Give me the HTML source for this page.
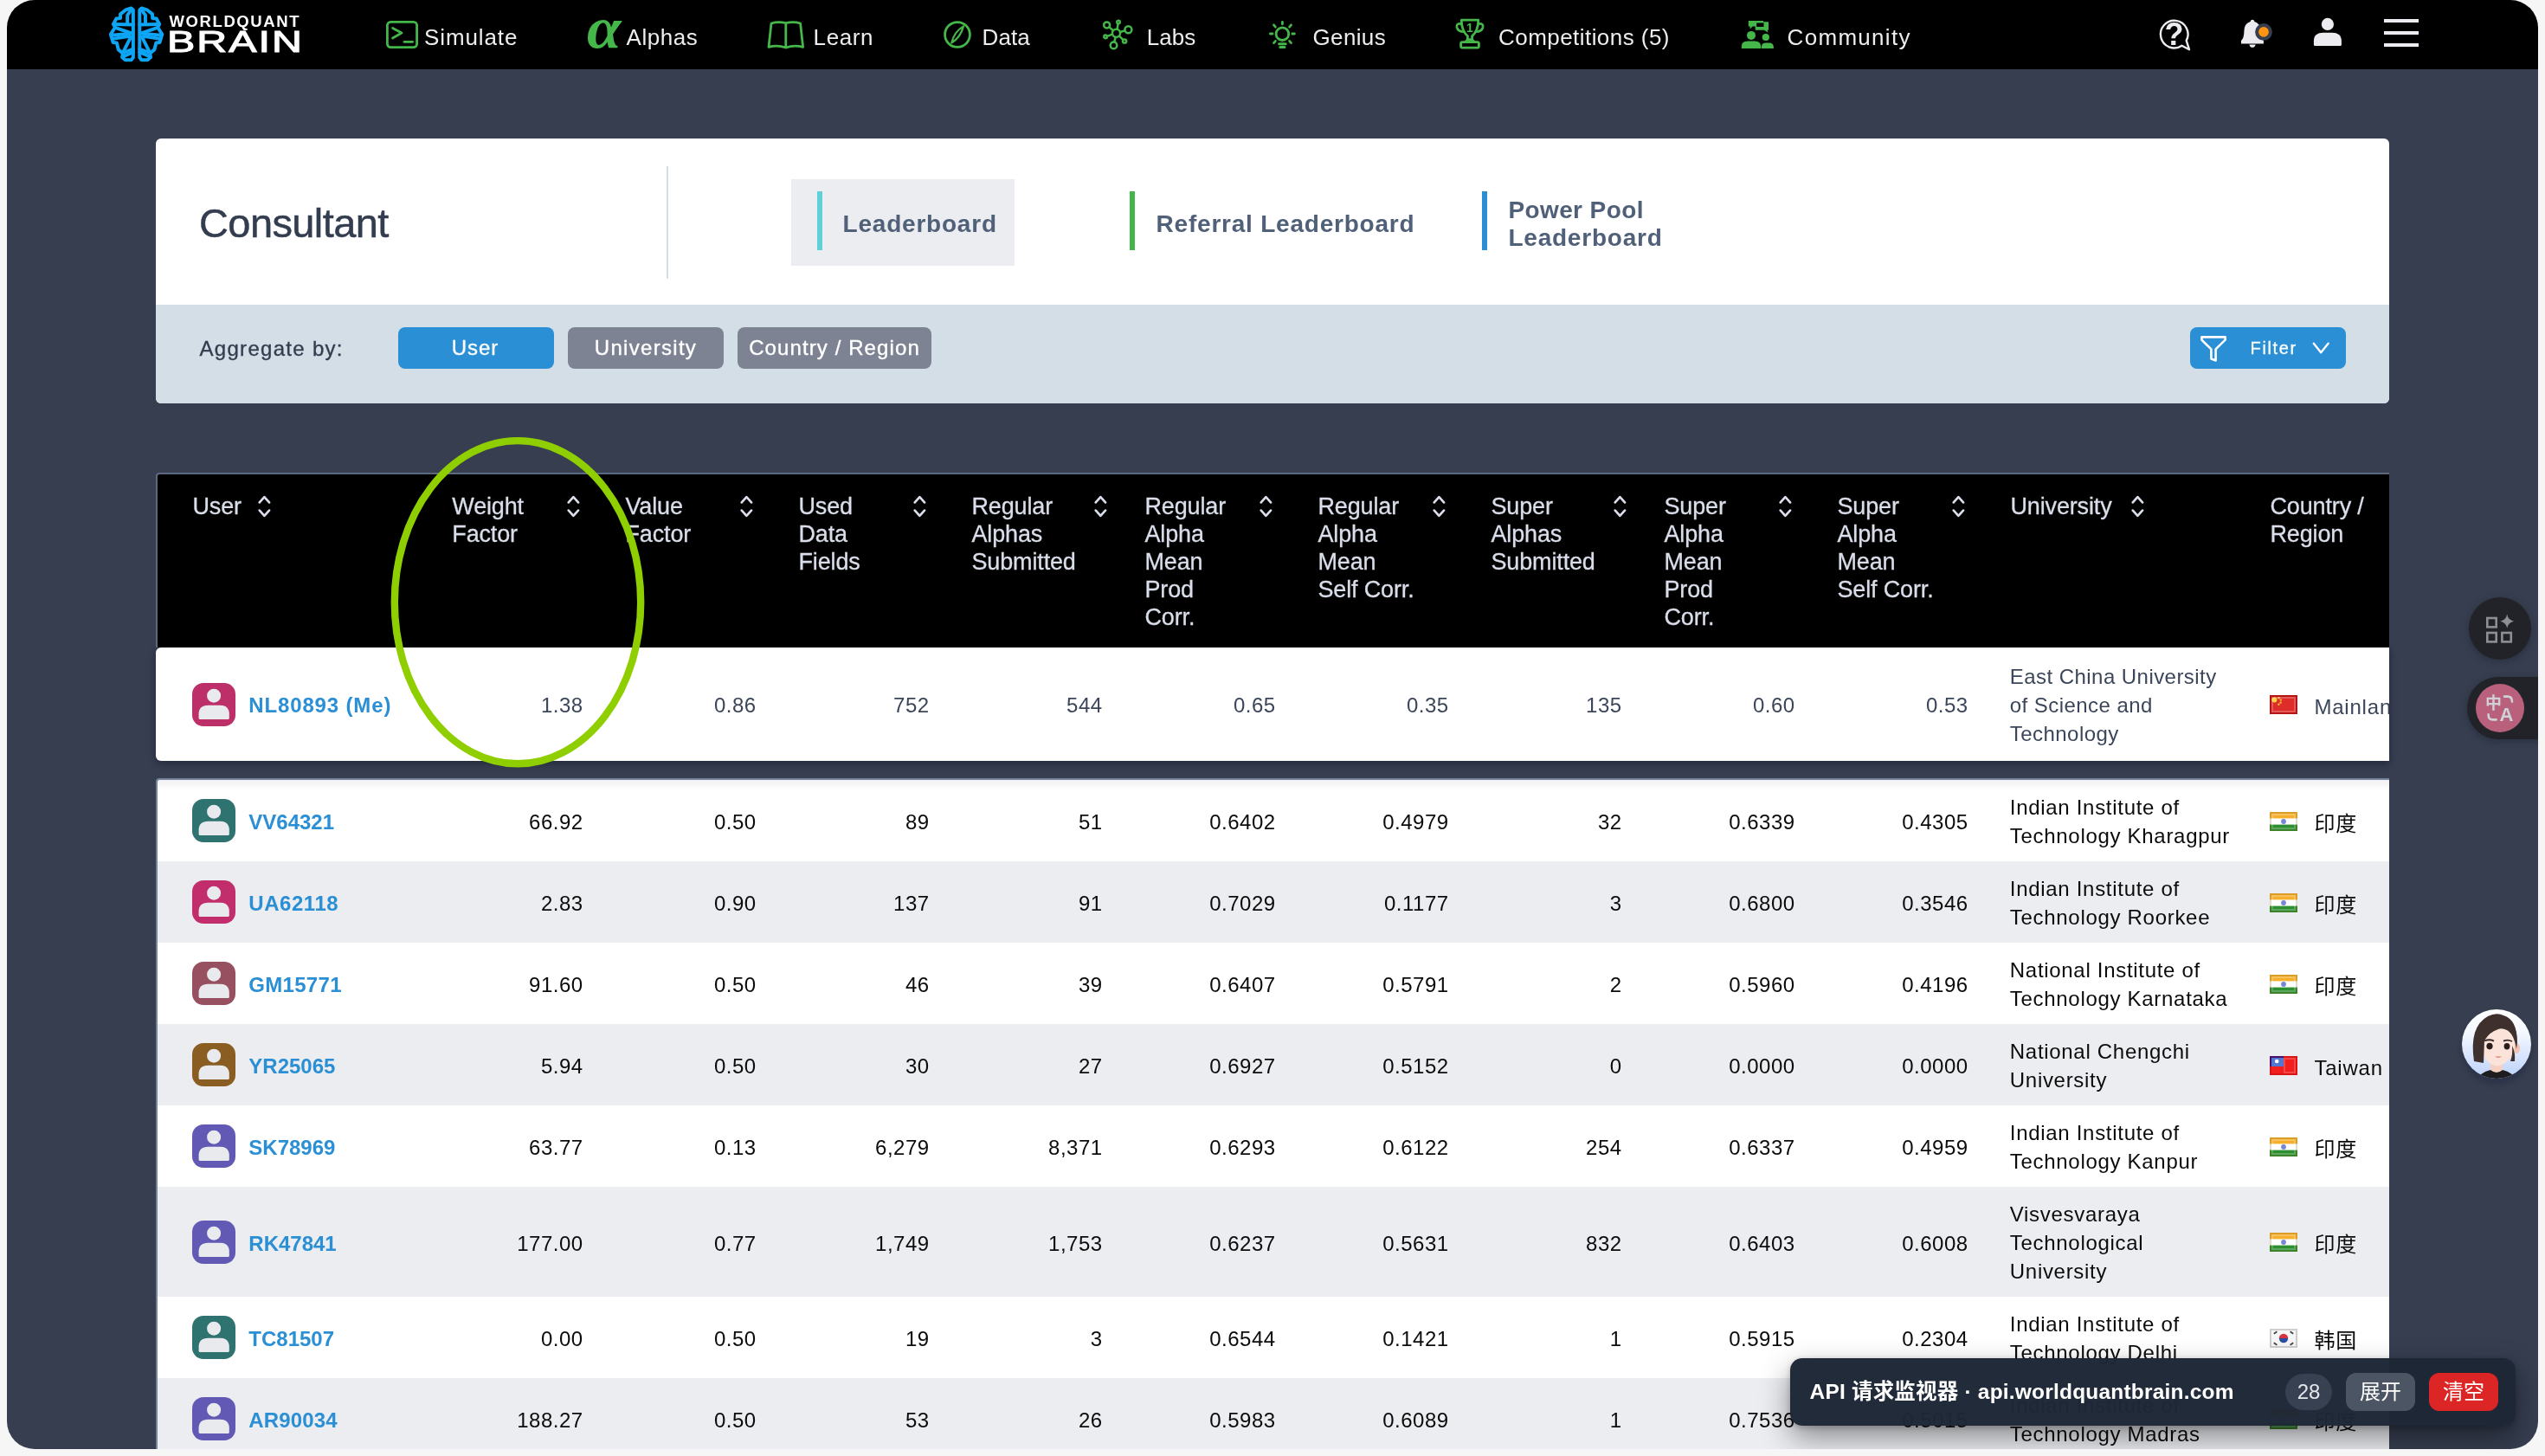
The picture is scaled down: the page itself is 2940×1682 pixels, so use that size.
<!DOCTYPE html><html lang="en"><head><meta charset="utf-8"><title>Consultant Leaderboard - WorldQuant BRAIN</title><style>
*{box-sizing:border-box;margin:0;padding:0}
html,body{width:2940px;height:1682px;overflow:hidden;background:#f6f6f6}
@media (max-width:1600px){html{zoom:.5}}
body{font-family:"Liberation Sans","Noto Sans CJK SC",sans-serif;position:relative}
#app{will-change:transform;position:absolute;left:0;top:0;width:2940px;height:1682px;background:#363e50;clip-path:inset(0px 8px 8px 8px round 32px);overflow:hidden}
.abs{position:absolute}
.t{position:absolute;white-space:pre;line-height:1}
#hdr{position:absolute;left:0;top:0;width:2940px;height:80px;background:#000}
.nav{color:#ededed;font-size:26px}
#card{position:absolute;left:180px;top:160px;width:2580px;height:306px;background:#fff;border-radius:6px;overflow:hidden}
#agg{position:absolute;left:0;top:192px;width:2580px;height:114px;background:#d4dee7}
.btn{position:absolute;top:218px;height:48px;border-radius:8px;color:#fff;font-size:24px;line-height:48px;text-align:center;white-space:pre;-webkit-text-stroke:.35px #fff}
.tabtxt{position:absolute;font-weight:bold;font-size:28px;line-height:32px;color:#506079;letter-spacing:.78px;white-space:pre}
#thead{position:absolute;left:180px;top:546px;width:2580px;height:202px;background:#000;border-top:2px solid #5b6a80;border-left:2px solid #5b6a80;border-radius:4px 0 0 0;overflow:hidden}
.th{position:absolute;top:21px;font-size:27px;line-height:32px;color:#d9deea;letter-spacing:-.15px;white-space:pre;-webkit-text-stroke:.3px #d9deea}
.si{position:absolute;top:24px;width:16px;height:26px}
#me{position:absolute;left:180px;top:748px;width:2580px;height:131px;background:#fff;border-radius:6px 0 0 6px;overflow:hidden;color:#3b465a;box-shadow:0 3px 9px rgba(12,16,30,.45)}
#tb{position:absolute;left:180px;top:899px;width:2580px;height:800px;background:linear-gradient(#f1f1f3,#fff 12px);border-top:2px solid #76839a;border-left:2px solid #76839a;overflow:hidden;color:#0b0b0b;border-radius:4px 0 0 0}
#tb .c{padding-top:3.2px}
#tb .cty{padding-top:6px}
.row{position:absolute;left:0;width:2580px}
.row.alt{background:#ecedf1}
.c{position:absolute;top:0;height:100%;display:flex;align-items:center;font-size:24px;line-height:33px;white-space:pre;padding-top:1.5px}
.num{justify-content:flex-end;text-align:right;letter-spacing:.5px}
.name{font-weight:bold;color:#2a8fd4;letter-spacing:0}
.uni{letter-spacing:.7px}
.cty{letter-spacing:.8px;padding-top:5px}
.av{position:absolute;left:42px;width:50px;height:50px;border-radius:13px}
.flag{position:absolute;width:32px;height:22px}
</style></head><body><div id="app">
<div id="hdr">
<svg class="abs" style="left:120px;top:4px" width="76" height="72" viewBox="0 0 1537 1456" fill="none" stroke="#0da5f4" stroke-width="80" stroke-linejoin="round" stroke-linecap="round"><g><path d="M685 150 L640 110 L510 150 L385 250 L385 345 L290 355 L225 480 L260 560 L160 720 L215 910 L300 920 L340 1080 L440 1160 L430 1260 L500 1320 L640 1320 L685 1260 Z"/><path d="M625 165 L550 275 L550 455"/><path d="M225 485 L685 495"/><path d="M262 562 L660 700"/><path d="M185 745 L640 700"/><path d="M235 822 L600 765"/><path d="M625 790 L450 1140"/><path d="M440 1158 L685 1062"/><path d="M432 1250 L685 1135"/></g><g transform="translate(1520,0) scale(-1,1)"><path d="M685 150 L640 110 L510 150 L385 250 L385 345 L290 355 L225 480 L260 560 L160 720 L215 910 L300 920 L340 1080 L440 1160 L430 1260 L500 1320 L640 1320 L685 1260 Z"/><path d="M625 165 L550 275 L550 455"/><path d="M225 485 L685 495"/><path d="M262 562 L660 700"/><path d="M185 745 L640 700"/><path d="M235 822 L600 765"/><path d="M625 790 L450 1140"/><path d="M440 1158 L685 1062"/><path d="M432 1250 L685 1135"/></g></svg>
<div class="t " style="left:195.5px;top:15.9px;font-size:18.5px;font-weight:bold;color:#fff;letter-spacing:1.6px">WORLDQUANT</div>
<div class="t" style="left:192.5px;top:30.4px;font-size:35px;color:#fff;-webkit-text-stroke:1.1px #fff;letter-spacing:1.5px;transform-origin:0 0;transform:scaleX(1.38)">BRAIN</div>
<svg class="abs" style="left:445px;top:22px" width="40" height="36" viewBox="0 0 40 36" fill="none" stroke="#45b649" stroke-width="2.8" stroke-linecap="round" stroke-linejoin="round"><rect x="2.4" y="3.3" width="34.2" height="29.3" rx="4"/><path d="M8.6 10.4 L19 16 L8.6 22"/><path d="M22 26.3 H31.6"/></svg>
<div class="t nav" style="left:490px;top:29.8px;font-size:26px;letter-spacing:0.9px">Simulate</div>
<div class="t" style="left:677.5px;top:-1px;font-family:'Liberation Serif',serif;font-style:italic;font-weight:bold;font-size:67px;color:#45b649;transform-origin:0 50%;transform:scaleX(1.07)">α</div>
<div class="t nav" style="left:723.5px;top:29.8px;font-size:26px;letter-spacing:0.55px">Alphas</div>
<svg class="abs" style="left:885px;top:22px" width="46" height="36" viewBox="0 0 46 36" fill="none" stroke="#45b649" stroke-width="2.8" stroke-linecap="round" stroke-linejoin="round"><path d="M22.8 4.6 Q14 2.4 6 5 L3 32.4 Q13 29.6 22.8 33 Q32.6 29.6 42.6 32.4 L39.6 5 Q31.6 2.4 22.8 4.6 V33"/></svg>
<div class="t nav" style="left:939.6px;top:29.8px;font-size:26px;letter-spacing:0.6px">Learn</div>
<svg class="abs" style="left:1088px;top:22px" width="36" height="36" viewBox="0 0 36 36" fill="none" stroke="#45b649" stroke-width="2.8" stroke-linejoin="round"><circle cx="18" cy="18" r="14.4"/><path d="M25 8.4 Q14.5 14.5 11.2 27.5 Q21.5 21.5 25 8.4 Z" stroke-width="2.2"/></svg>
<div class="t nav" style="left:1134.5px;top:29.8px;font-size:26px;letter-spacing:0.1px">Data</div>
<svg class="abs" style="left:1272px;top:21px" width="40" height="38" viewBox="0 0 40 38" fill="none" stroke="#45b649" stroke-width="2.5" stroke-linecap="round"><circle cx="17.5" cy="17.3" r="4.6"/><circle cx="6.6" cy="7.9" r="3.5"/><circle cx="20" cy="4.6" r="1.8"/><circle cx="31.4" cy="13.2" r="4"/><circle cx="5.1" cy="21.4" r="1.8"/><circle cx="27.1" cy="26.5" r="2.1"/><circle cx="14.5" cy="31.4" r="3.8"/><path d="M9.4 10.4 L14 14.2 M19.5 6.6 L18.6 12.6 M27.6 14.4 L22 16 M7 20.8 L13 18.6 M25.4 24.8 L21 20.6 M15.2 27.6 L16.6 22"/></svg>
<div class="t nav" style="left:1324.8px;top:29.8px;font-size:26px;letter-spacing:0px">Labs</div>
<svg class="abs" style="left:1461px;top:20px" width="40" height="40" viewBox="0 0 40 40" fill="none" stroke="#45b649" stroke-width="2.8" stroke-linecap="round"><circle cx="20.4" cy="19.2" r="7.3"/><path d="M20.4 5.4 V7.8 M10.5 8.8 L12.4 11.1 M30.5 8.8 L28.6 11.1 M6.4 19 H9 M31.8 19 H34.4 M10.5 29.6 L12.4 27.4 M30.5 29.6 L28.6 27.4"/><path d="M16.6 30.8 H24.2 M17.8 34.6 H23" stroke-width="3"/></svg>
<div class="t nav" style="left:1516.5px;top:29.8px;font-size:26px;letter-spacing:0.35px">Genius</div>
<svg class="abs" style="left:1679px;top:19px" width="38" height="40" viewBox="0 0 38 40" fill="none" stroke="#45b649" stroke-width="2.8" stroke-linecap="round" stroke-linejoin="round"><path d="M9.2 4.2 H28.8 Q28.4 17 21.6 22.6 V26.6 H16.4 V22.6 Q9.6 17 9.2 4.2 Z"/><path d="M9.4 8.6 Q3 7.4 4 12.6 Q5.4 17.6 12 17.6 M28.6 8.6 Q35 7.4 34 12.6 Q32.6 17.6 26 17.6"/><path d="M16.4 26.6 L13.6 29.6 H24.4 L21.6 26.6"/><rect x="8.6" y="29.6" width="20.8" height="6.6" rx="1.6"/></svg>
<div class="t" style="left:1694px;top:25.2px;font-size:14px;font-weight:bold;color:#45b649">1</div>
<div class="t nav" style="left:1731px;top:29.8px;font-size:26px;letter-spacing:0.45px">Competitions (5)</div>
<svg class="abs" style="left:2010px;top:22px" width="42" height="36" viewBox="0 0 42 36" fill="#45b649"><circle cx="13" cy="18.9" r="5"/><path d="M1.8 34 V32 Q1.8 25.6 9 25.6 H17 Q24.2 25.6 24.2 32 V34 Z"/><circle cx="29.8" cy="21" r="4.1"/><path d="M24.8 34 V32.6 Q24.8 27.4 30 27.4 H33.6 Q38.9 27.4 38.9 32.6 V34 Z"/><path d="M9.8 2.1 H27 V8.6 H14.6 L11.6 11.6 V8.6 H9.8 Z"/><path d="M17.7 3.3 H33 V12.8 H31.6 L32.6 15.6 L28 12.8 H17.7 Z"/><rect x="19.2" y="4.5" width="8.3" height="4.5" fill="#000"/></svg>
<div class="t nav" style="left:2064.6px;top:29.8px;font-size:26px;letter-spacing:1.3px">Community</div>
<svg class="abs" style="left:2492px;top:20px" width="42" height="40" viewBox="0 0 42 40" fill="none" stroke="#ececf0" stroke-width="2.4" stroke-linejoin="round"><path d="M28.5 32.7 A15.8 15.8 0 1 1 33.7 26.9 L37 37.2 Z"/></svg>
<div class="t" style="left:2500.6px;top:21.5px;font-size:36px;font-weight:bold;color:#ececf0">?</div>
<svg class="abs" style="left:2586px;top:20px" width="44" height="38" viewBox="0 0 44 38"><path fill="#ececf0" d="M16 2.7 Q18 2.7 18.4 5 Q25.4 7 25.6 16 Q25.6 24 28.9 27 V30.6 H3 V27 Q6.4 24 6.4 16 Q6.6 7 13.6 5 Q14 2.7 16 2.7 Z"/><path fill="#ececf0" d="M12.4 31.4 H19.6 Q18.8 34.8 16 34.8 Q13.2 34.8 12.4 31.4 Z"/><circle cx="29" cy="16.9" r="9.9" fill="#363e50"/><circle cx="29" cy="16.9" r="5.9" fill="#ff9412"/></svg>
<svg class="abs" style="left:2670px;top:18px" width="38" height="38" viewBox="0 0 38 38" fill="#ececf0"><circle cx="18.9" cy="9.9" r="7.1"/><path d="M2.9 33.4 V29.6 Q2.9 19.8 14 19.8 H23.8 Q34.9 19.8 34.9 29.6 V33.4 Q34.9 34.9 33.4 34.9 H4.4 Q2.9 34.9 2.9 33.4 Z"/></svg>
<div class="abs" style="left:2754px;top:22px;width:40px;height:4px;background:#ececf0"></div>
<div class="abs" style="left:2754px;top:36px;width:40px;height:4px;background:#ececf0"></div>
<div class="abs" style="left:2754px;top:50px;width:40px;height:4px;background:#ececf0"></div>
</div>
<div id="card">
<div class="t" style="left:50px;top:73.8px;font-size:47px;color:#333d4f;letter-spacing:-.6px;-webkit-text-stroke:.5px #333d4f">Consultant</div>
<div class="abs" style="left:590px;top:32px;width:2px;height:130px;background:#d4dee7"></div>
<div class="abs" style="left:734px;top:47px;width:258px;height:100px;background:#ecedf1"></div>
<div class="abs" style="left:764px;top:61px;width:6px;height:68px;background:#5fcfd9"></div>
<div class="tabtxt" style="left:793.6px;top:82.8px">Leaderboard</div>
<div class="abs" style="left:1125px;top:61px;width:6px;height:68px;background:#44b649"></div>
<div class="tabtxt" style="left:1155.6px;top:82.8px">Referral Leaderboard</div>
<div class="abs" style="left:1532px;top:61px;width:6px;height:68px;background:#2b8ed4"></div>
<div class="tabtxt" style="left:1562.4px;top:67.3px"><span style="letter-spacing:.4px">Power Pool</span><br>Leaderboard</div>
<div id="agg"></div>
<div class="t" style="left:50.5px;top:230.7px;font-size:24px;color:#333d4f;letter-spacing:1.3px;-webkit-text-stroke:.35px #333d4f">Aggregate by:</div>
<div class="btn" style="left:280px;width:180px;background:#2a8fd4;letter-spacing:.9px;text-indent:-2px">User</div>
<div class="btn" style="left:476px;width:180px;background:#7e8394;letter-spacing:1.3px">University</div>
<div class="btn" style="left:672px;width:224px;background:#7e8394;letter-spacing:1.1px">Country / Region</div>
<div class="btn" style="left:2350px;width:180px;background:#2a8fd4"></div>
<svg class="abs" style="left:2360px;top:226px" width="34" height="34" viewBox="0 0 34 34" fill="none" stroke="#fff" stroke-width="2.6" stroke-linejoin="round"><path d="M3.4 3.4 H30.6 V6.6 L19.6 17.4 V30.4 L14.4 28.6 V17.4 L3.4 6.6 Z"/></svg>
<div class="t" style="left:2419.6px;top:232.3px;font-size:20px;color:#fff;letter-spacing:1.6px;-webkit-text-stroke:.3px #fff">Filter</div>
<svg class="abs" style="left:2490px;top:234px" width="22" height="16" viewBox="0 0 22 16" fill="none" stroke="#fff" stroke-width="2.4" stroke-linecap="round" stroke-linejoin="round"><path d="M2.8 2.8 L11.2 13.2 L19.6 2.8"/></svg>
</div>
<div id="thead">
<div class="th" style="left:40.5px">User</div>
<svg class="si" style="left:115.5px" viewBox="0 0 16 26" fill="none" stroke="#d9deea" stroke-width="2.7" stroke-linecap="round" stroke-linejoin="round"><path d="M1.8 8.4 L7.4 2.2 L13 8.4 M1.8 17.6 L7.4 23.8 L13 17.6"/></svg>
<div class="th" style="left:340.29999999999995px">Weight<br>Factor</div>
<svg class="si" style="left:473px" viewBox="0 0 16 26" fill="none" stroke="#d9deea" stroke-width="2.7" stroke-linecap="round" stroke-linejoin="round"><path d="M1.8 8.4 L7.4 2.2 L13 8.4 M1.8 17.6 L7.4 23.8 L13 17.6"/></svg>
<div class="th" style="left:540.5px">Value<br>Factor</div>
<svg class="si" style="left:673px" viewBox="0 0 16 26" fill="none" stroke="#d9deea" stroke-width="2.7" stroke-linecap="round" stroke-linejoin="round"><path d="M1.8 8.4 L7.4 2.2 L13 8.4 M1.8 17.6 L7.4 23.8 L13 17.6"/></svg>
<div class="th" style="left:740.5px">Used<br>Data<br>Fields</div>
<svg class="si" style="left:873px" viewBox="0 0 16 26" fill="none" stroke="#d9deea" stroke-width="2.7" stroke-linecap="round" stroke-linejoin="round"><path d="M1.8 8.4 L7.4 2.2 L13 8.4 M1.8 17.6 L7.4 23.8 L13 17.6"/></svg>
<div class="th" style="left:940.5px">Regular<br>Alphas<br>Submitted</div>
<svg class="si" style="left:1082px" viewBox="0 0 16 26" fill="none" stroke="#d9deea" stroke-width="2.7" stroke-linecap="round" stroke-linejoin="round"><path d="M1.8 8.4 L7.4 2.2 L13 8.4 M1.8 17.6 L7.4 23.8 L13 17.6"/></svg>
<div class="th" style="left:1140.5px">Regular<br>Alpha<br>Mean<br>Prod<br>Corr.</div>
<svg class="si" style="left:1273px" viewBox="0 0 16 26" fill="none" stroke="#d9deea" stroke-width="2.7" stroke-linecap="round" stroke-linejoin="round"><path d="M1.8 8.4 L7.4 2.2 L13 8.4 M1.8 17.6 L7.4 23.8 L13 17.6"/></svg>
<div class="th" style="left:1340.5px">Regular<br>Alpha<br>Mean<br>Self Corr.</div>
<svg class="si" style="left:1473px" viewBox="0 0 16 26" fill="none" stroke="#d9deea" stroke-width="2.7" stroke-linecap="round" stroke-linejoin="round"><path d="M1.8 8.4 L7.4 2.2 L13 8.4 M1.8 17.6 L7.4 23.8 L13 17.6"/></svg>
<div class="th" style="left:1540.5px">Super<br>Alphas<br>Submitted</div>
<svg class="si" style="left:1682px" viewBox="0 0 16 26" fill="none" stroke="#d9deea" stroke-width="2.7" stroke-linecap="round" stroke-linejoin="round"><path d="M1.8 8.4 L7.4 2.2 L13 8.4 M1.8 17.6 L7.4 23.8 L13 17.6"/></svg>
<div class="th" style="left:1740.5px">Super<br>Alpha<br>Mean<br>Prod<br>Corr.</div>
<svg class="si" style="left:1873px" viewBox="0 0 16 26" fill="none" stroke="#d9deea" stroke-width="2.7" stroke-linecap="round" stroke-linejoin="round"><path d="M1.8 8.4 L7.4 2.2 L13 8.4 M1.8 17.6 L7.4 23.8 L13 17.6"/></svg>
<div class="th" style="left:1940.5px">Super<br>Alpha<br>Mean<br>Self Corr.</div>
<svg class="si" style="left:2073px" viewBox="0 0 16 26" fill="none" stroke="#d9deea" stroke-width="2.7" stroke-linecap="round" stroke-linejoin="round"><path d="M1.8 8.4 L7.4 2.2 L13 8.4 M1.8 17.6 L7.4 23.8 L13 17.6"/></svg>
<div class="th" style="left:2140.5px">University</div>
<svg class="si" style="left:2279.5px" viewBox="0 0 16 26" fill="none" stroke="#d9deea" stroke-width="2.7" stroke-linecap="round" stroke-linejoin="round"><path d="M1.8 8.4 L7.4 2.2 L13 8.4 M1.8 17.6 L7.4 23.8 L13 17.6"/></svg>
<div class="th" style="left:2440.5px">Country /<br>Region</div>
</div>
<div id="me">
<div class="row" style="top:0px;height:131px;">
<svg class="av"  style="left:42px;top:40.5px;background:#bd2f69" viewBox="0 0 50 50"><circle cx="25.1" cy="14.7" r="8" fill="#e9eaee"/><path fill="#e9eaee" d="M7.6 40.4 V36 Q7.6 25.8 18.4 25.8 H32 Q42.8 25.8 42.8 36 V40.4 Q42.8 41.9 41.3 41.9 H9.1 Q7.6 41.9 7.6 40.4 Z"/></svg>
<div class="c name" style="left:107.30000000000001px;letter-spacing:.85px">NL80893 (Me)</div>
<div class="c num" style="left:333.6px;width:160px">1.38</div>
<div class="c num" style="left:533.6px;width:160px">0.86</div>
<div class="c num" style="left:733.5999999999999px;width:160px">752</div>
<div class="c num" style="left:933.5999999999999px;width:160px">544</div>
<div class="c num" style="left:1133.6px;width:160px">0.65</div>
<div class="c num" style="left:1333.6px;width:160px">0.35</div>
<div class="c num" style="left:1533.6px;width:160px">135</div>
<div class="c num" style="left:1733.6px;width:160px">0.60</div>
<div class="c num" style="left:1933.6px;width:160px">0.53</div>
<div class="c uni" style="left:2141.8px;padding-top:2.2px;letter-spacing:.45px">East China University<br>of Science and<br>Technology</div>
<svg class="flag" style="left:2442px;top:55.1px" viewBox="0 0 16 11"><rect width="16" height="11" fill="#dd2c2a"/><circle cx="2.7" cy="2.8" r="1.5" fill="#fbd43c"/><circle cx="5.3" cy="1.6" r=".6" fill="#f9c132"/><circle cx="6.4" cy="2.8" r=".6" fill="#f9c132"/><circle cx="6.3" cy="4.3" r=".6" fill="#f9c132"/><circle cx="5.2" cy="5.4" r=".6" fill="#f9c132"/><rect x=".5" y=".5" width="15" height="10" fill="none" stroke="rgba(150,0,0,.55)"/><rect x="1.5" y="1.5" width="13" height="8" fill="none" stroke="rgba(255,255,255,.22)"/></svg>
<div class="c cty" style="left:2493.4px">Mainland China</div>
</div>
</div>
<div id="tb">
<div class="row" style="top:0px;height:94px;">
<svg class="av"  style="left:40px;top:22.0px;background:#2e7370" viewBox="0 0 50 50"><circle cx="25.1" cy="14.7" r="8" fill="#e9eaee"/><path fill="#e9eaee" d="M7.6 40.4 V36 Q7.6 25.8 18.4 25.8 H32 Q42.8 25.8 42.8 36 V40.4 Q42.8 41.9 41.3 41.9 H9.1 Q7.6 41.9 7.6 40.4 Z"/></svg>
<div class="c name" style="left:105.30000000000001px;letter-spacing:0px">VV64321</div>
<div class="c num" style="left:331.6px;width:160px">66.92</div>
<div class="c num" style="left:531.6px;width:160px">0.50</div>
<div class="c num" style="left:731.5999999999999px;width:160px">89</div>
<div class="c num" style="left:931.5999999999999px;width:160px">51</div>
<div class="c num" style="left:1131.6px;width:160px">0.6402</div>
<div class="c num" style="left:1331.6px;width:160px">0.4979</div>
<div class="c num" style="left:1531.6px;width:160px">32</div>
<div class="c num" style="left:1731.6px;width:160px">0.6339</div>
<div class="c num" style="left:1931.6px;width:160px">0.4305</div>
<div class="c uni" style="left:2139.8px;padding-top:2.2px;">Indian Institute of<br>Technology Kharagpur</div>
<svg class="flag" style="left:2440px;top:36.6px" viewBox="0 0 16 11"><rect width="16" height="11" fill="#fff"/><rect width="16" height="3.7" fill="#f6b02e"/><rect y="7.3" width="16" height="3.7" fill="#2c8f30"/><circle cx="8" cy="5.5" r="1.45" fill="#7686d6"/><rect x=".5" y=".5" width="15" height="10" fill="none" stroke="rgba(120,90,20,.22)"/><rect x="1.5" y="1.5" width="13" height="8" fill="none" stroke="rgba(255,255,255,.22)"/></svg>
<div class="c cty" style="left:2491.4px">印度</div>
</div>
<div class="row alt" style="top:94px;height:94px;">
<svg class="av"  style="left:40px;top:22.0px;background:#c22e6c" viewBox="0 0 50 50"><circle cx="25.1" cy="14.7" r="8" fill="#e9eaee"/><path fill="#e9eaee" d="M7.6 40.4 V36 Q7.6 25.8 18.4 25.8 H32 Q42.8 25.8 42.8 36 V40.4 Q42.8 41.9 41.3 41.9 H9.1 Q7.6 41.9 7.6 40.4 Z"/></svg>
<div class="c name" style="left:105.30000000000001px;letter-spacing:0.55px">UA62118</div>
<div class="c num" style="left:331.6px;width:160px">2.83</div>
<div class="c num" style="left:531.6px;width:160px">0.90</div>
<div class="c num" style="left:731.5999999999999px;width:160px">137</div>
<div class="c num" style="left:931.5999999999999px;width:160px">91</div>
<div class="c num" style="left:1131.6px;width:160px">0.7029</div>
<div class="c num" style="left:1331.6px;width:160px">0.1177</div>
<div class="c num" style="left:1531.6px;width:160px">3</div>
<div class="c num" style="left:1731.6px;width:160px">0.6800</div>
<div class="c num" style="left:1931.6px;width:160px">0.3546</div>
<div class="c uni" style="left:2139.8px;padding-top:2.2px;">Indian Institute of<br>Technology Roorkee</div>
<svg class="flag" style="left:2440px;top:36.6px" viewBox="0 0 16 11"><rect width="16" height="11" fill="#fff"/><rect width="16" height="3.7" fill="#f6b02e"/><rect y="7.3" width="16" height="3.7" fill="#2c8f30"/><circle cx="8" cy="5.5" r="1.45" fill="#7686d6"/><rect x=".5" y=".5" width="15" height="10" fill="none" stroke="rgba(120,90,20,.22)"/><rect x="1.5" y="1.5" width="13" height="8" fill="none" stroke="rgba(255,255,255,.22)"/></svg>
<div class="c cty" style="left:2491.4px">印度</div>
</div>
<div class="row" style="top:188px;height:94px;">
<svg class="av"  style="left:40px;top:22.0px;background:#96505f" viewBox="0 0 50 50"><circle cx="25.1" cy="14.7" r="8" fill="#e9eaee"/><path fill="#e9eaee" d="M7.6 40.4 V36 Q7.6 25.8 18.4 25.8 H32 Q42.8 25.8 42.8 36 V40.4 Q42.8 41.9 41.3 41.9 H9.1 Q7.6 41.9 7.6 40.4 Z"/></svg>
<div class="c name" style="left:105.30000000000001px;letter-spacing:0.3px">GM15771</div>
<div class="c num" style="left:331.6px;width:160px">91.60</div>
<div class="c num" style="left:531.6px;width:160px">0.50</div>
<div class="c num" style="left:731.5999999999999px;width:160px">46</div>
<div class="c num" style="left:931.5999999999999px;width:160px">39</div>
<div class="c num" style="left:1131.6px;width:160px">0.6407</div>
<div class="c num" style="left:1331.6px;width:160px">0.5791</div>
<div class="c num" style="left:1531.6px;width:160px">2</div>
<div class="c num" style="left:1731.6px;width:160px">0.5960</div>
<div class="c num" style="left:1931.6px;width:160px">0.4196</div>
<div class="c uni" style="left:2139.8px;padding-top:2.2px;">National Institute of<br>Technology Karnataka</div>
<svg class="flag" style="left:2440px;top:36.6px" viewBox="0 0 16 11"><rect width="16" height="11" fill="#fff"/><rect width="16" height="3.7" fill="#f6b02e"/><rect y="7.3" width="16" height="3.7" fill="#2c8f30"/><circle cx="8" cy="5.5" r="1.45" fill="#7686d6"/><rect x=".5" y=".5" width="15" height="10" fill="none" stroke="rgba(120,90,20,.22)"/><rect x="1.5" y="1.5" width="13" height="8" fill="none" stroke="rgba(255,255,255,.22)"/></svg>
<div class="c cty" style="left:2491.4px">印度</div>
</div>
<div class="row alt" style="top:282px;height:94px;">
<svg class="av"  style="left:40px;top:22.0px;background:#8a5d22" viewBox="0 0 50 50"><circle cx="25.1" cy="14.7" r="8" fill="#e9eaee"/><path fill="#e9eaee" d="M7.6 40.4 V36 Q7.6 25.8 18.4 25.8 H32 Q42.8 25.8 42.8 36 V40.4 Q42.8 41.9 41.3 41.9 H9.1 Q7.6 41.9 7.6 40.4 Z"/></svg>
<div class="c name" style="left:105.30000000000001px;letter-spacing:0px">YR25065</div>
<div class="c num" style="left:331.6px;width:160px">5.94</div>
<div class="c num" style="left:531.6px;width:160px">0.50</div>
<div class="c num" style="left:731.5999999999999px;width:160px">30</div>
<div class="c num" style="left:931.5999999999999px;width:160px">27</div>
<div class="c num" style="left:1131.6px;width:160px">0.6927</div>
<div class="c num" style="left:1331.6px;width:160px">0.5152</div>
<div class="c num" style="left:1531.6px;width:160px">0</div>
<div class="c num" style="left:1731.6px;width:160px">0.0000</div>
<div class="c num" style="left:1931.6px;width:160px">0.0000</div>
<div class="c uni" style="left:2139.8px;padding-top:2.2px;">National Chengchi<br>University</div>
<svg class="flag" style="left:2440px;top:36.6px" viewBox="0 0 16 11"><rect width="16" height="11" fill="#f21f1f"/><rect width="8" height="6" fill="#1717a6"/><rect x="1" y="1" width="7" height="5" fill="#5277d0"/><circle cx="4.1" cy="3" r="1.15" fill="#fff"/><rect x=".5" y=".5" width="15" height="10" fill="none" stroke="rgba(170,0,0,.35)"/><rect x="8.5" y="1.5" width="6" height="8" fill="none" stroke="rgba(255,255,255,.18)"/></svg>
<div class="c cty" style="left:2491.4px">Taiwan</div>
</div>
<div class="row" style="top:376px;height:94px;">
<svg class="av"  style="left:40px;top:22.0px;background:#6259b5" viewBox="0 0 50 50"><circle cx="25.1" cy="14.7" r="8" fill="#e9eaee"/><path fill="#e9eaee" d="M7.6 40.4 V36 Q7.6 25.8 18.4 25.8 H32 Q42.8 25.8 42.8 36 V40.4 Q42.8 41.9 41.3 41.9 H9.1 Q7.6 41.9 7.6 40.4 Z"/></svg>
<div class="c name" style="left:105.30000000000001px;letter-spacing:0px">SK78969</div>
<div class="c num" style="left:331.6px;width:160px">63.77</div>
<div class="c num" style="left:531.6px;width:160px">0.13</div>
<div class="c num" style="left:731.5999999999999px;width:160px">6,279</div>
<div class="c num" style="left:931.5999999999999px;width:160px">8,371</div>
<div class="c num" style="left:1131.6px;width:160px">0.6293</div>
<div class="c num" style="left:1331.6px;width:160px">0.6122</div>
<div class="c num" style="left:1531.6px;width:160px">254</div>
<div class="c num" style="left:1731.6px;width:160px">0.6337</div>
<div class="c num" style="left:1931.6px;width:160px">0.4959</div>
<div class="c uni" style="left:2139.8px;padding-top:2.2px;">Indian Institute of<br>Technology Kanpur</div>
<svg class="flag" style="left:2440px;top:36.6px" viewBox="0 0 16 11"><rect width="16" height="11" fill="#fff"/><rect width="16" height="3.7" fill="#f6b02e"/><rect y="7.3" width="16" height="3.7" fill="#2c8f30"/><circle cx="8" cy="5.5" r="1.45" fill="#7686d6"/><rect x=".5" y=".5" width="15" height="10" fill="none" stroke="rgba(120,90,20,.22)"/><rect x="1.5" y="1.5" width="13" height="8" fill="none" stroke="rgba(255,255,255,.22)"/></svg>
<div class="c cty" style="left:2491.4px">印度</div>
</div>
<div class="row alt" style="top:470px;height:127px;">
<svg class="av"  style="left:40px;top:38.5px;background:#6259b5" viewBox="0 0 50 50"><circle cx="25.1" cy="14.7" r="8" fill="#e9eaee"/><path fill="#e9eaee" d="M7.6 40.4 V36 Q7.6 25.8 18.4 25.8 H32 Q42.8 25.8 42.8 36 V40.4 Q42.8 41.9 41.3 41.9 H9.1 Q7.6 41.9 7.6 40.4 Z"/></svg>
<div class="c name" style="left:105.30000000000001px;letter-spacing:0px">RK47841</div>
<div class="c num" style="left:331.6px;width:160px">177.00</div>
<div class="c num" style="left:531.6px;width:160px">0.77</div>
<div class="c num" style="left:731.5999999999999px;width:160px">1,749</div>
<div class="c num" style="left:931.5999999999999px;width:160px">1,753</div>
<div class="c num" style="left:1131.6px;width:160px">0.6237</div>
<div class="c num" style="left:1331.6px;width:160px">0.5631</div>
<div class="c num" style="left:1531.6px;width:160px">832</div>
<div class="c num" style="left:1731.6px;width:160px">0.6403</div>
<div class="c num" style="left:1931.6px;width:160px">0.6008</div>
<div class="c uni" style="left:2139.8px;padding-top:2.2px;">Visvesvaraya<br>Technological<br>University</div>
<svg class="flag" style="left:2440px;top:53.1px" viewBox="0 0 16 11"><rect width="16" height="11" fill="#fff"/><rect width="16" height="3.7" fill="#f6b02e"/><rect y="7.3" width="16" height="3.7" fill="#2c8f30"/><circle cx="8" cy="5.5" r="1.45" fill="#7686d6"/><rect x=".5" y=".5" width="15" height="10" fill="none" stroke="rgba(120,90,20,.22)"/><rect x="1.5" y="1.5" width="13" height="8" fill="none" stroke="rgba(255,255,255,.22)"/></svg>
<div class="c cty" style="left:2491.4px">印度</div>
</div>
<div class="row" style="top:597px;height:94px;">
<svg class="av"  style="left:40px;top:22.0px;background:#2e7370" viewBox="0 0 50 50"><circle cx="25.1" cy="14.7" r="8" fill="#e9eaee"/><path fill="#e9eaee" d="M7.6 40.4 V36 Q7.6 25.8 18.4 25.8 H32 Q42.8 25.8 42.8 36 V40.4 Q42.8 41.9 41.3 41.9 H9.1 Q7.6 41.9 7.6 40.4 Z"/></svg>
<div class="c name" style="left:105.30000000000001px;letter-spacing:0px">TC81507</div>
<div class="c num" style="left:331.6px;width:160px">0.00</div>
<div class="c num" style="left:531.6px;width:160px">0.50</div>
<div class="c num" style="left:731.5999999999999px;width:160px">19</div>
<div class="c num" style="left:931.5999999999999px;width:160px">3</div>
<div class="c num" style="left:1131.6px;width:160px">0.6544</div>
<div class="c num" style="left:1331.6px;width:160px">0.1421</div>
<div class="c num" style="left:1531.6px;width:160px">1</div>
<div class="c num" style="left:1731.6px;width:160px">0.5915</div>
<div class="c num" style="left:1931.6px;width:160px">0.2304</div>
<div class="c uni" style="left:2139.8px;padding-top:2.2px;">Indian Institute of<br>Technology Delhi</div>
<svg class="flag" style="left:2440px;top:36.6px" viewBox="0 0 16 11"><rect width="16" height="11" fill="#f6f6f6"/><path d="M5.4 5.5 A2.6 2.6 0 0 1 10.6 5.5 Z" fill="#d8303f"/><path d="M5.4 5.5 A2.6 2.6 0 0 0 10.6 5.5 Z" fill="#2a4ea3"/><path d="M2.4 2.9 L4.2 1.6 M11.8 1.6 L13.6 2.9 M2.4 8.1 L4.2 9.4 M11.8 9.4 L13.6 8.1" stroke="#444" stroke-width=".9"/><rect x=".5" y=".5" width="15" height="10" fill="none" stroke="rgba(0,0,0,.16)"/></svg>
<div class="c cty" style="left:2491.4px">韩国</div>
</div>
<div class="row alt" style="top:691px;height:94px;">
<svg class="av"  style="left:40px;top:22.0px;background:#6259b5" viewBox="0 0 50 50"><circle cx="25.1" cy="14.7" r="8" fill="#e9eaee"/><path fill="#e9eaee" d="M7.6 40.4 V36 Q7.6 25.8 18.4 25.8 H32 Q42.8 25.8 42.8 36 V40.4 Q42.8 41.9 41.3 41.9 H9.1 Q7.6 41.9 7.6 40.4 Z"/></svg>
<div class="c name" style="left:105.30000000000001px;letter-spacing:0.15px">AR90034</div>
<div class="c num" style="left:331.6px;width:160px">188.27</div>
<div class="c num" style="left:531.6px;width:160px">0.50</div>
<div class="c num" style="left:731.5999999999999px;width:160px">53</div>
<div class="c num" style="left:931.5999999999999px;width:160px">26</div>
<div class="c num" style="left:1131.6px;width:160px">0.5983</div>
<div class="c num" style="left:1331.6px;width:160px">0.6089</div>
<div class="c num" style="left:1531.6px;width:160px">1</div>
<div class="c num" style="left:1731.6px;width:160px">0.7536</div>
<div class="c num" style="left:1931.6px;width:160px">0.5015</div>
<div class="c uni" style="left:2139.8px;padding-top:2.2px;">Indian Institute of<br>Technology Madras</div>
<svg class="flag" style="left:2440px;top:36.6px" viewBox="0 0 16 11"><rect width="16" height="11" fill="#fff"/><rect width="16" height="3.7" fill="#f6b02e"/><rect y="7.3" width="16" height="3.7" fill="#2c8f30"/><circle cx="8" cy="5.5" r="1.45" fill="#7686d6"/><rect x=".5" y=".5" width="15" height="10" fill="none" stroke="rgba(120,90,20,.22)"/><rect x="1.5" y="1.5" width="13" height="8" fill="none" stroke="rgba(255,255,255,.22)"/></svg>
<div class="c cty" style="left:2491.4px">印度</div>
</div>
</div>
<svg class="abs" style="left:440px;top:495px" width="320" height="405" viewBox="0 0 320 405" fill="none"><ellipse cx="158" cy="200.7" rx="142.2" ry="186.6" stroke="#8fce00" stroke-width="8.4"/></svg>
<div class="abs" style="left:2852px;top:690px;width:72px;height:72px;border-radius:36px;background:#212329;box-shadow:0 2px 10px rgba(0,0,0,.25)"></div>
<svg class="abs" style="left:2868px;top:706px" width="40" height="40" viewBox="0 0 40 40" fill="none" stroke="#8e8e93" stroke-width="2.6"><rect x="5.3" y="8" width="10.4" height="10.4"/><rect x="5.3" y="25" width="10.4" height="10.4"/><rect x="22.4" y="25" width="10.4" height="10.4"/><path d="M28.2 3.6 Q29.4 10.4 36 11.7 Q29.4 13 28.2 19.8 Q27 13 20.4 11.7 Q27 10.4 28.2 3.6 Z" fill="#8e8e93" stroke="none"/></svg>
<div class="abs" style="left:2850px;top:782px;width:100px;height:72px;border-radius:36px 0 0 36px;background:#212329;box-shadow:0 2px 10px rgba(0,0,0,.25)"></div>
<div class="abs" style="left:2860px;top:790px;width:56px;height:56px;border-radius:28px;background:#b8607c"></div>
<svg class="abs" style="left:2860px;top:790px" width="56" height="56" viewBox="0 0 56 56" fill="none" stroke="#cfd1d6" stroke-width="2.6" stroke-linecap="round"><text x="11" y="28.5" font-family="Noto Sans CJK SC, sans-serif" font-weight="bold" font-size="19" fill="#cfd1d6" stroke="none">中</text><text x="27.5" y="42.5" font-family="Liberation Sans, sans-serif" font-weight="bold" font-size="22" fill="#cfd1d6" stroke="none">A</text><path d="M33 14.6 H37 Q42 14.6 42 20.6"/><path d="M23.6 41.4 H19.6 Q14.6 41.4 14.6 35.4"/></svg>
<svg class="abs" style="left:2834px;top:1156px" width="100" height="104" viewBox="0 0 100 104"><defs><linearGradient id="ag" x1="0" y1="0" x2="0" y2="1"><stop offset="0" stop-color="#ffffff"/><stop offset=".35" stop-color="#f3f7ff"/><stop offset="1" stop-color="#bcd2fb"/></linearGradient><clipPath id="ac"><circle cx="50" cy="50" r="40"/></clipPath><filter id="af" x="-30%" y="-30%" width="160%" height="170%"><feGaussianBlur stdDeviation="5"/></filter></defs><circle cx="50" cy="56" r="40" fill="rgba(10,15,30,.22)" filter="url(#af)"/><circle cx="50" cy="50" r="40" fill="url(#ag)"/><g clip-path="url(#ac)"><path d="M28 88 Q40 78 50 80 Q60 78 72 88 L76 96 H24 Z" fill="#1d1d1f"/><path d="M43 66 H57 V80 Q50 86 43 80 Z" fill="#f6cfc3"/><ellipse cx="73" cy="55" rx="4.2" ry="6" fill="#f2c4b4"/><path d="M33 44 Q34 28 52 28 Q70 28 71 46 Q72 62 62 70 Q54 77 48 75 Q38 72 34 60 Z" fill="#fbe3da"/><path d="M24 70 Q18 30 40 18 Q50 13 58 17 Q74 22 74 48 L73 56 Q70 38 62 34 Q56 31 52 33 Q42 36 36 46 L35 72 Z" fill="#3d302d"/><path d="M68 52 Q72 60 71 70 L66 70 Q69 62 68 52 Z" fill="#3d302d"/><ellipse cx="42" cy="52.6" rx="3.6" ry="3.8" fill="#2a1d1b"/><ellipse cx="62" cy="52.8" rx="3.4" ry="3.7" fill="#2a1d1b"/><path d="M36 46.4 Q42 44 47 46.6" stroke="#3a2a27" stroke-width="1.8" fill="none"/><path d="M58 46.6 Q63 44.4 68 47" stroke="#3a2a27" stroke-width="1.8" fill="none"/><path d="M48 64.6 Q52 63.4 56 64.6 Q52 67.8 48 64.6 Z" fill="#e89a8a"/></g></svg>
<div class="abs" style="left:2068px;top:1569px;width:838px;height:77.5px;border-radius:14px;background:rgba(30,39,54,.98);box-shadow:0 14px 34px rgba(0,0,0,.42),0 2px 6px rgba(0,0,0,.2)"></div>
<div class="t " style="left:2090.5px;top:1596.1px;font-size:24.5px;font-weight:bold;color:#fff;letter-spacing:.2px">API 请求监视器 · api.worldquantbrain.com</div>
<div class="abs" style="left:2640px;top:1587px;width:54px;height:42px;border-radius:21px;background:#374151;color:#e5e7eb;font-size:24px;line-height:42px;text-align:center">28</div>
<div class="abs" style="left:2710px;top:1586px;width:80px;height:44px;border-radius:12px;background:#4b5563;color:#fff;font-size:24px;line-height:44.5px;text-align:center">展开</div>
<div class="abs" style="left:2806px;top:1586px;width:80px;height:44px;border-radius:12px;background:#dc2626;color:#fff;font-size:24px;line-height:44.5px;text-align:center">清空</div>
</div></body></html>
